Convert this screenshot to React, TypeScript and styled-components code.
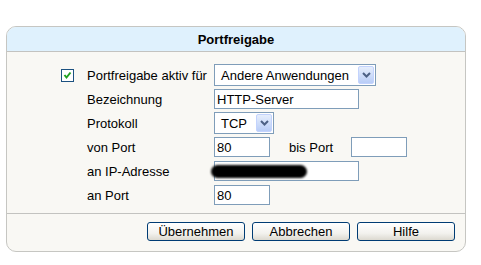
import React from "react";
import styled, { createGlobalStyle } from "styled-components";

const GlobalStyle = createGlobalStyle`
  body {
    margin: 0;
    background: #ffffff;
    font-family: "Liberation Sans", Arial, sans-serif;
    font-size: 13px;
    color: #000;
  }
`;

const Panel = styled.div`
  margin: 26px 0 0 6px;
  width: 458px;
  height: 224px;
  border: 1px solid #c6c6c2;
  border-radius: 10px;
  background: #f9f8f4;
  overflow: hidden;
  display: flex;
  flex-direction: column;
`;

const Header = styled.div`
  height: 24px;
  background: #dff1fd;
  border-bottom: 1px solid #c3c3c0;
  display: flex;
  align-items: center;
  justify-content: center;
  font-weight: bold;
  font-size: 13px;
`;

const Form = styled.div`
  flex: 1;
  padding: 11px 0 0 54px;
  display: grid;
  grid-template-columns: 26px 127px auto;
  grid-auto-rows: 24px;
  align-items: center;
  align-content: start;
`;

const Label = styled.div`
  grid-column: 2;
`;

const Field = styled.div`
  grid-column: 3;
  display: flex;
  align-items: center;
`;

const Check = styled.div`
  grid-column: 1;
  width: 11px;
  height: 11px;
  border: 1px solid #1c5180;
  background: #fff;
  display: flex;
  align-items: center;
  justify-content: center;
`;

const Box = styled.div<{ $w: number; $pad?: number }>`
  position: relative;
  width: ${(p) => p.$w}px;
  height: 20px;
  box-sizing: border-box;
  border: 1px solid #7f9db9;
  background: #fff;
  display: flex;
  align-items: center;
  padding-left: ${(p) => p.$pad ?? 2}px;
  font-size: 13px;
`;

const SelectBox = styled(Box)`
  height: 22px;
  padding-right: 1px;
  justify-content: space-between;
`;

const DropBtn = styled.div`
  width: 16px;
  height: 18px;
  box-sizing: border-box;
  border: 1px solid #c3d3fd;
  border-radius: 2px;
  background: linear-gradient(#e6eefc, #b9cdf7);
  display: flex;
  align-items: center;
  justify-content: center;
`;

const Inline = styled.span`
  margin: 0 18px 0 19px;
`;

const Blur = styled.div`
  position: absolute;
  left: -4px;
  top: 3px;
  width: 96px;
  height: 13px;
  border-radius: 7px;
  background: #000;
  filter: blur(1.2px);
`;

const Footer = styled.div`
  border-top: 1px solid #c3c3c0;
  height: 35px;
  display: flex;
  justify-content: flex-end;
  align-items: center;
  gap: 7px;
  padding: 0 10px 2px 0;
`;

const Button = styled.button`
  width: 98px;
  height: 19px;
  border: 1px solid #003c74;
  border-radius: 3px;
  background: linear-gradient(#ffffff, #f3f2ee 60%, #dcd9d0);
  font-family: "Liberation Sans", Arial, sans-serif;
  font-size: 13px;
  padding: 0;
  color: #000;
`;

const Chevron = () => (
  <svg width="9" height="6" viewBox="0 0 9 6">
    <path d="M1 1 L4.5 4.5 L8 1" stroke="#4d6185" strokeWidth="2" fill="none" />
  </svg>
);

const App: React.FC = () => (
  <>
    <GlobalStyle />
    <Panel>
      <Header>Portfreigabe</Header>
      <Form>
        <Check>
          <svg width="9" height="9" viewBox="0 0 9 9">
            <path d="M1.5 4 L3.5 6.5 L7.5 1.5" stroke="#21a121" strokeWidth="2" fill="none" />
          </svg>
        </Check>
        <Label>Portfreigabe aktiv für</Label>
        <Field>
          <SelectBox $w={162} $pad={6}>
            Andere Anwendungen
            <DropBtn>
              <Chevron />
            </DropBtn>
          </SelectBox>
        </Field>

        <Label>Bezeichnung</Label>
        <Field>
          <Box $w={145}>HTTP-Server</Box>
        </Field>

        <Label>Protokoll</Label>
        <Field>
          <SelectBox $w={60} $pad={6}>
            TCP
            <DropBtn>
              <Chevron />
            </DropBtn>
          </SelectBox>
        </Field>

        <Label>von Port</Label>
        <Field>
          <Box $w={56}>80</Box>
          <Inline>bis Port</Inline>
          <Box $w={56} />
        </Field>

        <Label>an IP-Adresse</Label>
        <Field>
          <Box $w={145}>
            <Blur />
          </Box>
        </Field>

        <Label>an Port</Label>
        <Field>
          <Box $w={56}>80</Box>
        </Field>
      </Form>
      <Footer>
        <Button>Übernehmen</Button>
        <Button>Abbrechen</Button>
        <Button>Hilfe</Button>
      </Footer>
    </Panel>
  </>
);

export default App;
